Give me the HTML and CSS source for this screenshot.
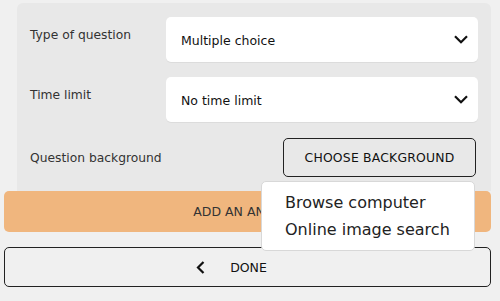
FILE: index.html
```html
<!DOCTYPE html>
<html>
<head>
<meta charset="utf-8">
<link rel="stylesheet" href="styles.css">
</head>
<body>
<div class="page">
  <div class="panel">
    <div class="row">
      <div class="label">Type of question</div>
      <div class="select">
        <span>Multiple choice</span>
        <svg class="chev" width="14" height="9" viewBox="0 0 14 9"><path d="M1 1.2 L7 7.2 L13 1.2" fill="none" stroke="#111" stroke-width="2.2"/></svg>
      </div>
    </div>
    <div class="row">
      <div class="label">Time limit</div>
      <div class="select">
        <span>No time limit</span>
        <svg class="chev" width="14" height="9" viewBox="0 0 14 9"><path d="M1 1.2 L7 7.2 L13 1.2" fill="none" stroke="#111" stroke-width="2.2"/></svg>
      </div>
    </div>
    <div class="row row-bg">
      <div class="label">Question background</div>
      <div class="choose-wrap">
        <button class="choose">CHOOSE BACKGROUND</button>
        <div class="menu">
          <div class="item">Browse computer</div>
          <div class="item">Online image search</div>
        </div>
      </div>
    </div>
  </div>
  <div class="add">ADD AN ANSWER</div>
  <div class="done">
    <svg class="back" width="9" height="13" viewBox="0 0 9 13"><path d="M7.5 1 L2 6.5 L7.5 12" fill="none" stroke="#111" stroke-width="2.2"/></svg>
    <span>DONE</span>
  </div>
</div>
</body>
</html>
```
FILE: styles.css
```css
* { box-sizing: border-box; }
html, body { margin: 0; padding: 0; }
body {
  background: #f0f0f0;
  font-family: "DejaVu Sans", "Noto Sans", sans-serif;
  color: #222;
  width: 500px;
  height: 301px;
  overflow: hidden;
}
.page {
  padding: 3px 9px 0 4px;
  display: flex;
  flex-direction: column;
}
.panel {
  margin-left: 13px;
  background: #e8e8e8;
  border-radius: 6px 6px 0 0;
  padding: 14px 13px 14px 13px;
  display: flex;
  flex-direction: column;
  gap: 15px;
}
.row {
  display: flex;
  align-items: flex-start;
}
.label {
  width: 136px;
  font-size: 12.3px;
  color: #333;
  padding-top: 11px;
}
.select {
  flex: 1;
  height: 45px;
  background: #fff;
  border-radius: 5px;
  display: flex;
  align-items: center;
  justify-content: space-between;
  padding: 0 10px 0 15px;
  font-size: 12.5px;
  color: #111;
  box-shadow: 0 1px 0 #dcdcdc;
}
.select span { padding-top: 1px; }
.row-bg { align-items: center; margin-top: 1px; }
.row-bg .label { padding-top: 0; flex: 1; }
.choose-wrap { position: relative; margin-right: 2px; }
.choose {
  width: 193px;
  height: 39px;
  background: transparent;
  border: 1.5px solid #222;
  border-radius: 5px;
  font-family: inherit;
  font-size: 12.4px;
  color: #111;
  letter-spacing: 0.2px;
}
.menu {
  position: absolute;
  left: -22px;
  top: 43px;
  width: 214px;
  height: 70px;
  background: #fff;
  border: 1px solid #d8d8d8;
  border-radius: 5px;
  padding: 7px 0 0 23px;
  z-index: 2;
}
.item {
  font-size: 16px;
  color: #222;
  line-height: 27px;
}
.add {
  height: 41px;
  background: #f0b67e;
  border-radius: 5px;
  display: flex;
  align-items: center;
  justify-content: center;
  font-size: 12.5px;
  color: #333;
}
.done {
  margin-top: 15px;
  height: 40px;
  border: 1.5px solid #222;
  border-radius: 5px;
  display: flex;
  align-items: center;
  justify-content: center;
  gap: 25px;
  font-size: 12.5px;
  color: #111;
  padding-right: 32px;
}
```
